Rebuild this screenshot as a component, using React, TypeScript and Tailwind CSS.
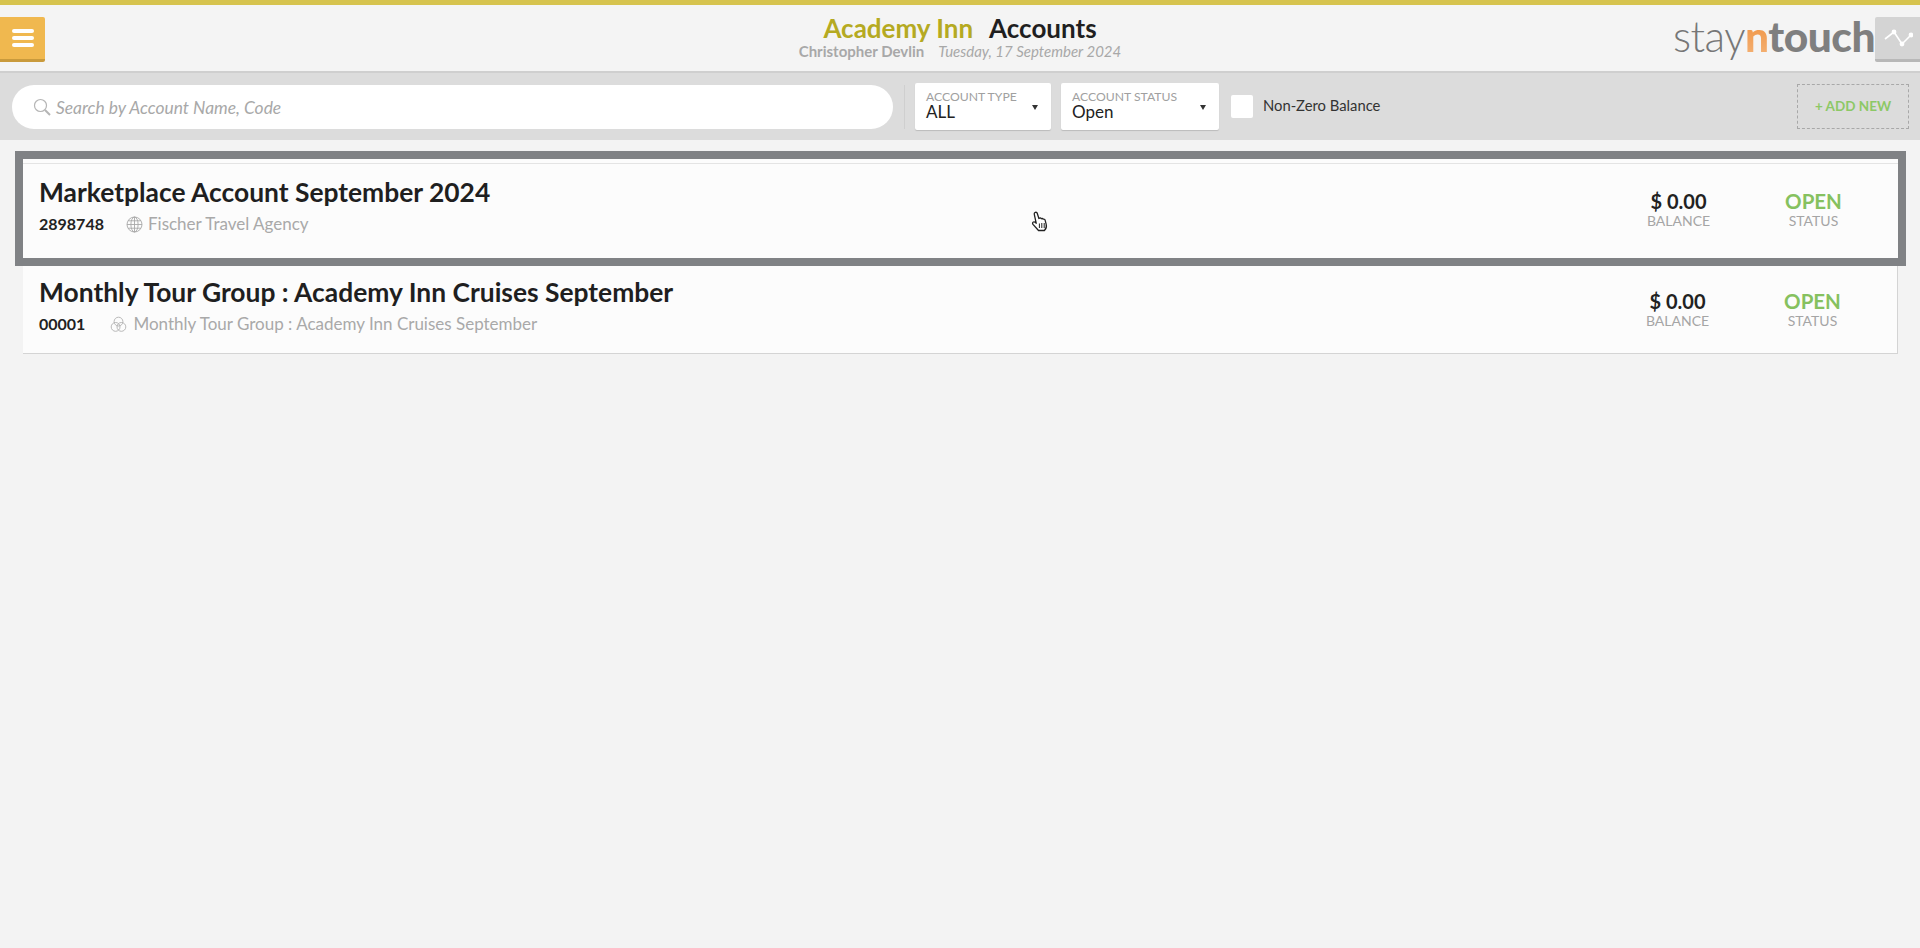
import React from 'react';

const GlobeIcon: React.FC = () => (
  <svg width="17" height="17" viewBox="0 0 17 17" fill="none" stroke="#a8a8a8" strokeWidth="0.9">
    <circle cx="8.5" cy="8.5" r="7.5" />
    <ellipse cx="8.5" cy="8.5" rx="3.6" ry="7.5" />
    <path d="M8.5 1v15M1 8.5h15M2 4.8h13M2 12.2h13" />
  </svg>
);

const GroupIcon: React.FC = () => (
  <svg width="17" height="17" viewBox="0 0 17 17" fill="none" stroke="#b0b0b0" strokeWidth="0.9">
    <circle cx="8.5" cy="5.6" r="4.4" />
    <circle cx="5.6" cy="10.9" r="4.4" />
    <circle cx="11.4" cy="10.9" r="4.4" />
  </svg>
);

const HandCursor: React.FC = () => (
  <svg width="18" height="22" viewBox="0 0 18 22" className="absolute left-[1031px] top-[211px]">
    <path
      d="M4 1.5c1-.6 2 0 2.3 1l1.6 5 .6-.4c.8-.4 1.5 0 1.8.6.7-.4 1.5-.2 1.9.5.8-.3 1.6.1 1.9.9l1.1 4.2c.6 2.4-.3 4.7-1.8 6.2H7.5L2 13.4c-.7-.9-.5-2 .4-2.4.7-.3 1.5 0 2.2.6l.6.6L3.3 3.3C3.1 2.6 3.4 1.9 4 1.5z"
      fill="#fff"
      stroke="#222"
      strokeWidth="1.3"
      strokeLinejoin="round"
    />
    <path d="M8.4 12.5v4.5M10.8 12v5M13.2 12v5" stroke="#222" strokeWidth="1" />
  </svg>
);

const FilterSelect: React.FC<{ label: string; value: string; width: string }> = ({ label, value, width }) => (
  <div className={`${width} h-[47px] bg-white rounded-[2px] shadow-[0_1px_1px_rgba(0,0,0,0.15)] pl-[11px] pr-[13px] pb-[3px] flex items-center justify-between`}>
    <div className="flex flex-col">
      <span className="text-[12.2px] leading-[13px] text-[#a0a0a0] whitespace-nowrap">{label}</span>
      <span className="text-[17px] leading-[18px] text-[#222]">{value}</span>
    </div>
    <span className="w-0 h-0 mt-[4px] border-l-[3.5px] border-r-[3.5px] border-t-[5px] border-l-transparent border-r-transparent border-t-[#333]" />
  </div>
);

const AccountRow: React.FC<{
  name: string;
  number: string;
  icon: React.ReactNode;
  sub: string;
  gapClass: string;
  rowClass: string;
}> = ({ name, number, icon, sub, gapClass, rowClass }) => (
  <div className={`bg-[#fcfcfc] flex items-center justify-between pl-[16px] ${rowClass}`}>
    <div>
      <h2 className="text-[26.4px] leading-[32px] font-bold text-[#1f1f1f]">{name}</h2>
      <div className="flex items-center mt-[4px]">
        <span className="text-[16px] leading-[24px] font-bold text-[#222]">{number}</span>
        <span className={`flex items-center ${gapClass}`}>
          {icon}
          <span className="text-[17px] leading-[24px] text-[#a9a9a9]">{sub}</span>
        </span>
      </div>
    </div>
    <div className="flex mr-[17px] pt-[8px]">
      <div className="w-[135px] text-center">
        <div className="text-[20px] leading-[22px] text-[#222] font-bold">$ 0.00</div>
        <div className="text-[14px] leading-[18px] text-[#a5a5a5]">BALANCE</div>
      </div>
      <div className="w-[135px] text-center">
        <div className="text-[20.5px] leading-[22px] text-[#86c15f] font-bold">OPEN</div>
        <div className="text-[14px] leading-[18px] text-[#a5a5a5]">STATUS</div>
      </div>
    </div>
  </div>
);

const App: React.FC = () => {
  return (
    <div className="relative min-h-[948px] bg-[#f3f3f3] font-['Lato',sans-serif] overflow-hidden">
      <div className="h-[5px] bg-[#d6c34e]" />

      <header className="h-[68px] bg-[#f4f4f4] flex items-start border-b-2 border-[#cfcfcf]">
        <div className="w-[300px]">
          <button className="mt-[12px] w-[45px] h-[45px] bg-[#f0b84f] rounded-r-[2px] border-b-[3px] border-[#c99a3c] flex flex-col items-center justify-center gap-[3px]">
            <span className="block w-[22px] h-[4px] rounded-full bg-white" />
            <span className="block w-[22px] h-[4px] rounded-full bg-white" />
            <span className="block w-[22px] h-[4px] rounded-full bg-white" />
          </button>
        </div>

        <div className="flex-1 flex flex-col items-center pt-[8px]">
          <div className="text-[26px] leading-[30px] font-bold">
            <span className="text-[#b5aa22]">Academy Inn</span>
            <span className="text-[#1f1f1f] ml-[16px]">Accounts</span>
          </div>
          <div className="text-[15px] leading-[17px] text-[#a8a8a8]">
            <span className="font-bold">Christopher Devlin</span>
            <span className="italic ml-[14px]">Tuesday, 17 September 2024</span>
          </div>
        </div>

        <div className="w-[300px] flex items-start justify-end">
          <div className="text-[42.5px] leading-[42px] mt-[10px] tracking-[-0.5px]">
            <span className="font-light text-[#777]">stay</span>
            <span className="font-black bg-gradient-to-b from-[#ee8a2c] to-[#f4b57a] bg-clip-text text-transparent">n</span>
            <span className="font-black text-[#7f7f7f]">touch</span>
          </div>
          <button className="mt-[12px] w-[45px] h-[45px] bg-[#d4d4d4] rounded-l-[2px] border-b-[3px] border-[#b8b8b8] flex items-center justify-center">
            <svg width="30" height="18" viewBox="0 0 30 18" fill="none" stroke="#fff" strokeWidth="1.6">
              <path d="M2 10l9-7 8 12 9-9" />
              <circle cx="11" cy="3" r="1.6" fill="#fff" />
              <circle cx="19" cy="15" r="1.6" fill="#fff" />
              <circle cx="28" cy="6" r="1.6" fill="#fff" />
            </svg>
          </button>
        </div>
      </header>

      <div className="h-[67px] bg-[#dcdcdc] flex items-center pl-[12px] pr-[11px]">
        <div className="w-[881px] h-[44px] bg-white rounded-full flex items-center pl-[21px] gap-[5px]">
          <svg width="18" height="18" viewBox="0 0 18 18" fill="none" stroke="#b5b5b5" strokeWidth="1.2">
            <circle cx="7.5" cy="7.5" r="6" />
            <path d="M12 12l5 5" strokeWidth="2" />
          </svg>
          <span className="text-[17.4px] italic text-[#a8a8a8] pt-[3px]">Search by Account Name, Code</span>
        </div>
        <div className="w-px h-[44px] bg-[#cfcfcf] ml-[11px] mr-[10px]" />
        <FilterSelect label="ACCOUNT TYPE" value="ALL" width="w-[136px]" />
        <div className="w-[10px]" />
        <FilterSelect label="ACCOUNT STATUS" value="Open" width="w-[158px]" />
        <div className="ml-[12px] w-[22px] h-[23px] bg-white rounded-[2px]" />
        <span className="ml-[10px] pb-[2px] text-[14.8px] text-[#333]">Non-Zero Balance</span>
        <button className="ml-auto w-[112px] h-[45px] border border-dashed border-[#a8a8a8] text-[13.5px] font-bold text-[#8cc866]">
          + ADD NEW
        </button>
      </div>

      <main className="pt-[19px] pl-[23px] pr-[22px]">
        <div className="bg-[#fcfcfc] outline-[8px] outline-solid outline-[#808285]">
          <div className="pt-[4px]">
            <div className="border-t border-[#e4e4e4]" />
          </div>
          <AccountRow
            name="Marketplace Account September 2024"
            number="2898748"
            icon={<GlobeIcon />}
            sub="Fischer Travel Agency"
            gapClass="gap-[5px] ml-[22px]"
            rowClass="h-[94px] pb-[10px]"
          />
        </div>
        <div className="mt-[8px]">
          <AccountRow
            name="Monthly Tour Group : Academy Inn Cruises September"
            number="00001"
            icon={<GroupIcon />}
            sub="Monthly Tour Group : Academy Inn Cruises September"
            gapClass="gap-[6px] ml-[25px]"
            rowClass="h-[88px] pb-[7px] border-b border-r border-[#d4d4d4]"
          />
        </div>
      </main>

      <HandCursor />
    </div>
  );
};

export default App;
